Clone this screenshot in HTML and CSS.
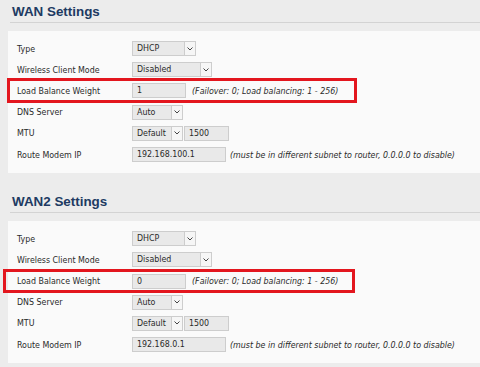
FILE: index.html
```html
<!DOCTYPE html>
<html lang="en">
<head>
    <meta charset="UTF-8">
    <title>WAN Settings</title>
    <link rel="stylesheet" href="styles.css">
</head>
<body>
    <div class="section">
        <h2 class="section-title">WAN Settings</h2>
        <div class="panel">
            <div class="row">
                <span class="label">Type</span>
                <div class="field">
                    <span class="select w-type"><span class="select-text">DHCP</span><span class="arrow"><svg width="6" height="4" viewBox="0 0 6 4"><path d="M0.5 0.5 L3 3 L5.5 0.5" fill="none" stroke="#444" stroke-width="1"/></svg></span></span>
                </div>
            </div>
            <div class="row">
                <span class="label">Wireless Client Mode</span>
                <div class="field">
                    <span class="select w-mode"><span class="select-text">Disabled</span><span class="arrow"><svg width="6" height="4" viewBox="0 0 6 4"><path d="M0.5 0.5 L3 3 L5.5 0.5" fill="none" stroke="#444" stroke-width="1"/></svg></span></span>
                </div>
            </div>
            <div class="row mark">
                <span class="label">Load Balance Weight</span>
                <div class="field">
                    <span class="input w-weight">1</span>
                    <span class="hint">(Failover: 0; Load balancing: 1 - 256)</span>
                </div>
            </div>
            <div class="row">
                <span class="label">DNS Server</span>
                <div class="field">
                    <span class="select w-short"><span class="select-text">Auto</span><span class="arrow"><svg width="6" height="4" viewBox="0 0 6 4"><path d="M0.5 0.5 L3 3 L5.5 0.5" fill="none" stroke="#444" stroke-width="1"/></svg></span></span>
                </div>
            </div>
            <div class="row">
                <span class="label">MTU</span>
                <div class="field">
                    <span class="select w-short"><span class="select-text">Default</span><span class="arrow"><svg width="6" height="4" viewBox="0 0 6 4"><path d="M0.5 0.5 L3 3 L5.5 0.5" fill="none" stroke="#444" stroke-width="1"/></svg></span></span>
                    <span class="input w-mtu">1500</span>
                </div>
            </div>
            <div class="row">
                <span class="label">Route Modem IP</span>
                <div class="field">
                    <span class="input w-ip">192.168.100.1</span>
                    <span class="hint hint-ip">(must be in different subnet to router, 0.0.0.0 to disable)</span>
                </div>
            </div>
        </div>
    </div>

    <div class="section">
        <h2 class="section-title">WAN2 Settings</h2>
        <div class="panel">
            <div class="row">
                <span class="label">Type</span>
                <div class="field">
                    <span class="select w-type"><span class="select-text">DHCP</span><span class="arrow"><svg width="6" height="4" viewBox="0 0 6 4"><path d="M0.5 0.5 L3 3 L5.5 0.5" fill="none" stroke="#444" stroke-width="1"/></svg></span></span>
                </div>
            </div>
            <div class="row">
                <span class="label">Wireless Client Mode</span>
                <div class="field">
                    <span class="select w-mode"><span class="select-text">Disabled</span><span class="arrow"><svg width="6" height="4" viewBox="0 0 6 4"><path d="M0.5 0.5 L3 3 L5.5 0.5" fill="none" stroke="#444" stroke-width="1"/></svg></span></span>
                </div>
            </div>
            <div class="row mark mark-2">
                <span class="label">Load Balance Weight</span>
                <div class="field">
                    <span class="input w-weight">0</span>
                    <span class="hint">(Failover: 0; Load balancing: 1 - 256)</span>
                </div>
            </div>
            <div class="row">
                <span class="label">DNS Server</span>
                <div class="field">
                    <span class="select w-short"><span class="select-text">Auto</span><span class="arrow"><svg width="6" height="4" viewBox="0 0 6 4"><path d="M0.5 0.5 L3 3 L5.5 0.5" fill="none" stroke="#444" stroke-width="1"/></svg></span></span>
                </div>
            </div>
            <div class="row">
                <span class="label">MTU</span>
                <div class="field">
                    <span class="select w-short"><span class="select-text">Default</span><span class="arrow"><svg width="6" height="4" viewBox="0 0 6 4"><path d="M0.5 0.5 L3 3 L5.5 0.5" fill="none" stroke="#444" stroke-width="1"/></svg></span></span>
                    <span class="input w-mtu">1500</span>
                </div>
            </div>
            <div class="row">
                <span class="label">Route Modem IP</span>
                <div class="field">
                    <span class="input w-ip">192.168.0.1</span>
                    <span class="hint hint-ip">(must be in different subnet to router, 0.0.0.0 to disable)</span>
                </div>
            </div>
        </div>
    </div>
</body>
</html>
```

FILE: styles.css
```css
body {
    font-family: 'DejaVu Sans Condensed', 'Liberation Sans', Arial, sans-serif;
    font-size: 8.8px;
    color: #2a2a2a;
    margin: 0;
    background-color: #ececec;
    overflow: hidden;
}

.section {
    margin-bottom: 17px;
}

.section-title {
    margin: 0 0 8px 10px;
    padding: 4px 0 2px 2px;
    font-family: 'Liberation Sans', Arial, sans-serif;
    font-size: 13.4px;
    line-height: 16px;
    font-weight: bold;
    color: #203a62;
    border-bottom: 1px solid #d3d3d3;
}

.panel {
    margin-left: 8px;
    padding: 7px 0 8px 9px;
    background-color: #fafafa;
}

.row {
    display: grid;
    grid-template-columns: 115px auto;
    align-items: center;
    height: 21.2px;
    position: relative;
}

.field {
    display: flex;
    align-items: center;
}

.select,
.input {
    box-sizing: border-box;
    height: 15px;
    border: 1px solid #cdcdcd;
    background-color: #e9e9e9;
    line-height: 13px;
}

.select {
    display: inline-flex;
}

.select-text {
    flex: 1;
    padding-left: 4px;
}

.arrow {
    width: 10px;
    border-left: 1px solid #cdcdcd;
    background-color: #f6f6f6;
    display: flex;
    align-items: center;
    justify-content: center;
}

.input {
    display: inline-block;
    padding-left: 4px;
}

.w-type { width: 64px; }
.w-mode { width: 80px; }
.w-short { width: 51px; }
.w-weight { width: 54px; }
.w-mtu { width: 45px; margin-left: 1px; }
.w-ip { width: 94px; }

.hint {
    font-style: italic;
    margin-left: 6px;
    white-space: nowrap;
}

.hint-ip {
    margin-left: 4px;
}

/* red annotation frame */
.mark::after {
    content: "";
    position: absolute;
    top: -2px;
    bottom: -1px;
    left: -10px;
    width: 350px;
    border: 3px solid #e3161e;
    box-sizing: border-box;
}

.mark-2::after {
    left: -14px;
    width: 352px;
}
```
